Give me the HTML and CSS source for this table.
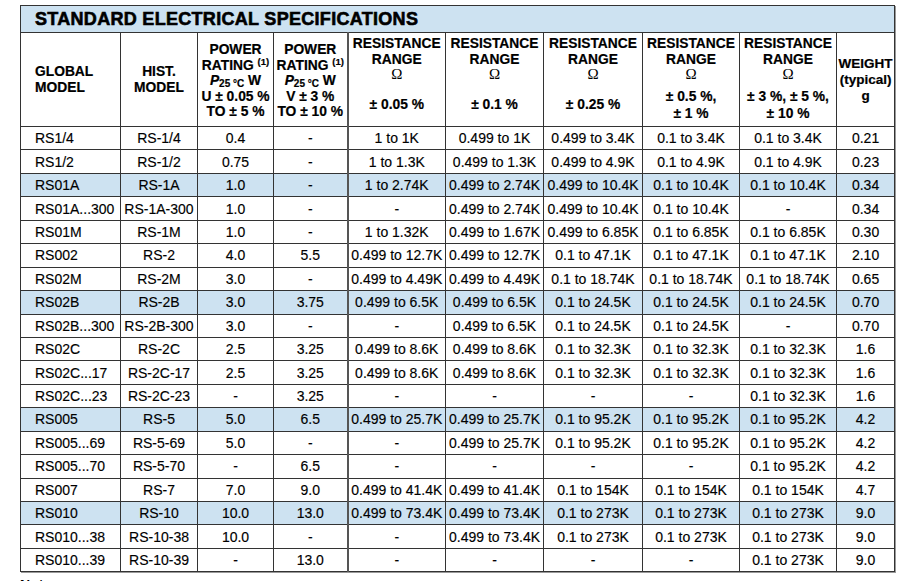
FILE: index.html
```html
<!DOCTYPE html>
<html>
<head>
<meta charset="utf-8">
<link rel="stylesheet" href="styles.css">
</head>
<body>
<div class="page">
<table class="spec">
<colgroup>
<col class="c1"><col class="c2"><col class="c3"><col class="c4"><col class="c5"><col class="c6"><col class="c7"><col class="c8"><col class="c9"><col class="c10">
</colgroup>
<thead>
<tr class="title-row"><th colspan="10" class="title">STANDARD ELECTRICAL SPECIFICATIONS</th></tr>
<tr class="head-row">
<th class="h-left">GLOBAL<br>MODEL</th>
<th class="h-mid">HIST.<br>MODEL</th>
<th class="h-power">POWER<br>RATING <sup>(1)</sup><br><i>P</i><sub>25 °C</sub> W<br>U ± 0.05 %<br>TO ± 5 %</th>
<th class="h-power">POWER<br>RATING <sup>(1)</sup><br><i>P</i><sub>25 °C</sub> W<br>V ± 3 %<br>TO ± 10 %</th>
<th class="h-rr sep"><div class="rr-head">RESISTANCE<br>RANGE<br><span class="ohm">Ω</span></div><div class="rr-tol">± 0.05 %</div></th>
<th class="h-rr"><div class="rr-head">RESISTANCE<br>RANGE<br><span class="ohm">Ω</span></div><div class="rr-tol">± 0.1 %</div></th>
<th class="h-rr"><div class="rr-head">RESISTANCE<br>RANGE<br><span class="ohm">Ω</span></div><div class="rr-tol">± 0.25 %</div></th>
<th class="h-rr"><div class="rr-head">RESISTANCE<br>RANGE<br><span class="ohm">Ω</span></div><div class="rr-tol">± 0.5 %,<br>± 1 %</div></th>
<th class="h-rr"><div class="rr-head">RESISTANCE<br>RANGE<br><span class="ohm">Ω</span></div><div class="rr-tol">± 3 %, ± 5 %,<br>± 10 %</div></th>
<th class="h-weight">WEIGHT<br>(typical)<br>g</th>
</tr>
</thead>
<tbody>
<tr><td>RS1/4</td><td>RS-1/4</td><td>0.4</td><td>-</td><td class="sep">1 to 1K</td><td>0.499 to 1K</td><td>0.499 to 3.4K</td><td>0.1 to 3.4K</td><td>0.1 to 3.4K</td><td>0.21</td></tr>
<tr><td>RS1/2</td><td>RS-1/2</td><td>0.75</td><td>-</td><td class="sep">1 to 1.3K</td><td>0.499 to 1.3K</td><td>0.499 to 4.9K</td><td>0.1 to 4.9K</td><td>0.1 to 4.9K</td><td>0.23</td></tr>
<tr class="hl"><td>RS01A</td><td>RS-1A</td><td>1.0</td><td>-</td><td class="sep">1 to 2.74K</td><td>0.499 to 2.74K</td><td>0.499 to 10.4K</td><td>0.1 to 10.4K</td><td>0.1 to 10.4K</td><td>0.34</td></tr>
<tr><td>RS01A...300</td><td>RS-1A-300</td><td>1.0</td><td>-</td><td class="sep">-</td><td>0.499 to 2.74K</td><td>0.499 to 10.4K</td><td>0.1 to 10.4K</td><td>-</td><td>0.34</td></tr>
<tr><td>RS01M</td><td>RS-1M</td><td>1.0</td><td>-</td><td class="sep">1 to 1.32K</td><td>0.499 to 1.67K</td><td>0.499 to 6.85K</td><td>0.1 to 6.85K</td><td>0.1 to 6.85K</td><td>0.30</td></tr>
<tr><td>RS002</td><td>RS-2</td><td>4.0</td><td>5.5</td><td class="sep">0.499 to 12.7K</td><td>0.499 to 12.7K</td><td>0.1 to 47.1K</td><td>0.1 to 47.1K</td><td>0.1 to 47.1K</td><td>2.10</td></tr>
<tr><td>RS02M</td><td>RS-2M</td><td>3.0</td><td>-</td><td class="sep">0.499 to 4.49K</td><td>0.499 to 4.49K</td><td>0.1 to 18.74K</td><td>0.1 to 18.74K</td><td>0.1 to 18.74K</td><td>0.65</td></tr>
<tr class="hl"><td>RS02B</td><td>RS-2B</td><td>3.0</td><td>3.75</td><td class="sep">0.499 to 6.5K</td><td>0.499 to 6.5K</td><td>0.1 to 24.5K</td><td>0.1 to 24.5K</td><td>0.1 to 24.5K</td><td>0.70</td></tr>
<tr><td>RS02B...300</td><td>RS-2B-300</td><td>3.0</td><td>-</td><td class="sep">-</td><td>0.499 to 6.5K</td><td>0.1 to 24.5K</td><td>0.1 to 24.5K</td><td>-</td><td>0.70</td></tr>
<tr><td>RS02C</td><td>RS-2C</td><td>2.5</td><td>3.25</td><td class="sep">0.499 to 8.6K</td><td>0.499 to 8.6K</td><td>0.1 to 32.3K</td><td>0.1 to 32.3K</td><td>0.1 to 32.3K</td><td>1.6</td></tr>
<tr><td>RS02C...17</td><td>RS-2C-17</td><td>2.5</td><td>3.25</td><td class="sep">0.499 to 8.6K</td><td>0.499 to 8.6K</td><td>0.1 to 32.3K</td><td>0.1 to 32.3K</td><td>0.1 to 32.3K</td><td>1.6</td></tr>
<tr><td>RS02C...23</td><td>RS-2C-23</td><td>-</td><td>3.25</td><td class="sep">-</td><td>-</td><td>-</td><td>-</td><td>0.1 to 32.3K</td><td>1.6</td></tr>
<tr class="hl"><td>RS005</td><td>RS-5</td><td>5.0</td><td>6.5</td><td class="sep">0.499 to 25.7K</td><td>0.499 to 25.7K</td><td>0.1 to 95.2K</td><td>0.1 to 95.2K</td><td>0.1 to 95.2K</td><td>4.2</td></tr>
<tr><td>RS005...69</td><td>RS-5-69</td><td>5.0</td><td>-</td><td class="sep">-</td><td>0.499 to 25.7K</td><td>0.1 to 95.2K</td><td>0.1 to 95.2K</td><td>0.1 to 95.2K</td><td>4.2</td></tr>
<tr><td>RS005...70</td><td>RS-5-70</td><td>-</td><td>6.5</td><td class="sep">-</td><td>-</td><td>-</td><td>-</td><td>0.1 to 95.2K</td><td>4.2</td></tr>
<tr><td>RS007</td><td>RS-7</td><td>7.0</td><td>9.0</td><td class="sep">0.499 to 41.4K</td><td>0.499 to 41.4K</td><td>0.1 to 154K</td><td>0.1 to 154K</td><td>0.1 to 154K</td><td>4.7</td></tr>
<tr class="hl"><td>RS010</td><td>RS-10</td><td>10.0</td><td>13.0</td><td class="sep">0.499 to 73.4K</td><td>0.499 to 73.4K</td><td>0.1 to 273K</td><td>0.1 to 273K</td><td>0.1 to 273K</td><td>9.0</td></tr>
<tr><td>RS010...38</td><td>RS-10-38</td><td>10.0</td><td>-</td><td class="sep">-</td><td>0.499 to 73.4K</td><td>0.1 to 273K</td><td>0.1 to 273K</td><td>0.1 to 273K</td><td>9.0</td></tr>
<tr><td>RS010...39</td><td>RS-10-39</td><td>-</td><td>13.0</td><td class="sep">-</td><td>-</td><td>-</td><td>-</td><td>0.1 to 273K</td><td>9.0</td></tr>
</tbody>
</table>
<p class="notes">Notes</p>
</div>
</body>
</html>
```
FILE: styles.css
```css
html, body {
  margin: 0;
  padding: 0;
  background: #fff;
}
body {
  font-family: "Liberation Sans", Arial, sans-serif;
  color: #000;
}
.page {
  padding: 5px 0 0 20px;
}
.spec {
  border-collapse: collapse;
  table-layout: fixed;
  width: 875px;
  border: 1px solid #222;
  box-shadow: 1px 1px 0 #999;
}
.c1 { width: 100px; }
.c2 { width: 77px; }
.c3 { width: 76px; }
.c4 { width: 74px; }
.c5 { width: 98px; }
.c6 { width: 98px; }
.c7 { width: 99px; }
.c8 { width: 97px; }
.c9 { width: 97px; }
.c10 { width: 58px; }

.spec th, .spec td {
  border: 1px solid #333;
  padding: 0;
}
.spec .sep {
  border-left: 2px solid #555;
}
.title-row .title {
  background: #cde2f1;
  height: 26px;
  text-align: left;
  padding-left: 14px;
  font-size: 18px;
  font-weight: 700;
  letter-spacing: 0.3px;
  -webkit-text-stroke: 0.6px #000;
  color: #000;
}
.head-row th {
  height: 90px;
  font-size: 13.8px;
  font-weight: 700;
  line-height: 15.5px;
  color: #000;
  text-align: center;
  vertical-align: middle;
  -webkit-text-stroke: 0.2px #000;
}
.head-row .h-left {
  text-align: left;
  padding-left: 14px;
  line-height: 16px;
}
.head-row .h-mid {
  line-height: 16px;
}
.head-row .h-power {
  line-height: 15.6px;
  padding-top: 3px;
}
.head-row sup {
  font-size: 9.5px;
  vertical-align: 5px;
  line-height: 0;
}
.head-row sub {
  font-size: 10px;
  vertical-align: -2px;
  line-height: 0;
}
.head-row .h-rr {
  vertical-align: top;
  padding-top: 3px;
}
.rr-head {
  line-height: 15.5px;
}
.ohm {
  font-family: "Liberation Serif", "Times New Roman", serif;
  font-weight: 400;
  font-size: 15px;
  line-height: 15px;
  -webkit-text-stroke: 0;
}
.rr-tol {
  height: 38px;
  padding-top: 6px;
  box-sizing: border-box;
  display: flex;
  align-items: center;
  justify-content: center;
  line-height: 17px;
}
.head-row .h-weight {
  line-height: 16px;
  padding-top: 1px;
  font-size: 13.5px;
}
.spec tbody tr {
  height: 23.45px;
}
.spec tbody td {
  font-size: 14px;
  text-align: center;
  vertical-align: middle;
  white-space: nowrap;
  color: #000;
  -webkit-text-stroke: 0.15px #000;
}
.spec tbody td:first-child {
  text-align: left;
  padding-left: 14px;
}
.spec tbody tr.hl td {
  background: #cde2f1;
}
.notes {
  margin: 5px 0 0 0;
  font-size: 14px;
  font-weight: 700;
}
```
